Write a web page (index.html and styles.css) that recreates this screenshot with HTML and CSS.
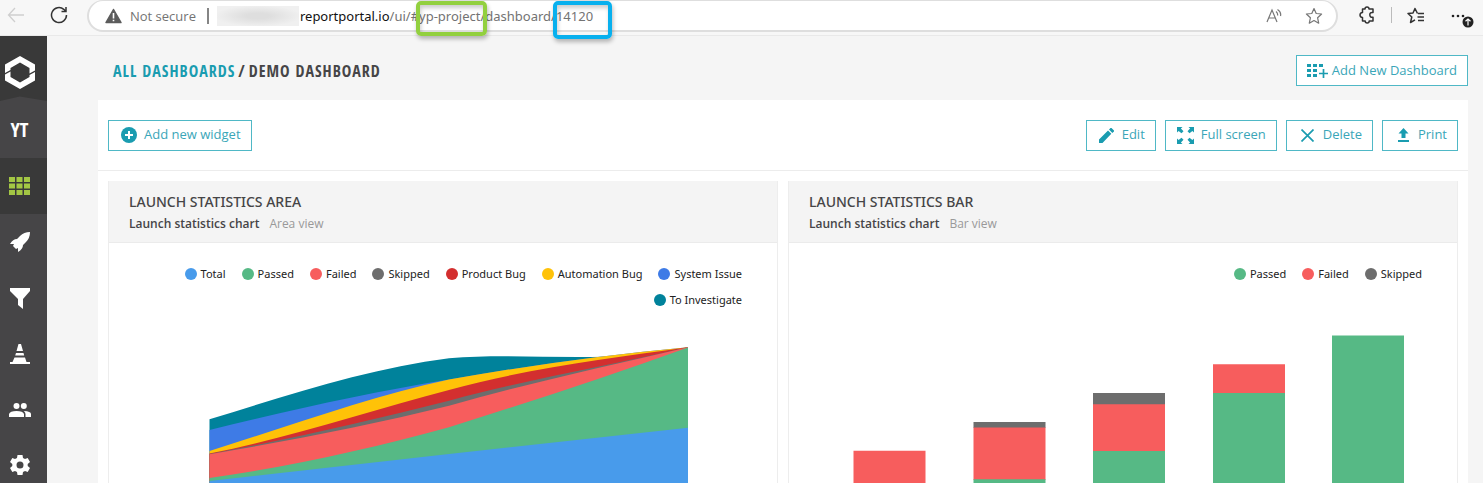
FILE: index.html
```html
<!DOCTYPE html>
<html lang="en">
<head>
<meta charset="utf-8">
<title>Demo dashboard</title>
<link rel="stylesheet" href="styles.css">
</head>
<body>
<header class="browser">
  <button class="chrome-btn back" aria-label="Back"><svg width="18" height="16" viewBox="0 0 18 16"><path d="M8 1 1.500 8 8 15M1.500 8H17" fill="none" stroke="#cfcfcf" stroke-width="1.300"/></svg></button>
  <button class="chrome-btn reload" aria-label="Reload"><svg width="18" height="18" viewBox="0 0 18 18"><path d="M16.500 9A7.500 7.500 0 1 1 13.800 3.300L15.500 5M16 1V5.500H11.500" fill="none" stroke="#333" stroke-width="1.500"/></svg></button>
  <div class="address">
    <svg class="warn" width="17" height="16" viewBox="0 0 17 16"><path d="M8.500 1.500 16 14.500H1Z" fill="#5c5c5c" stroke="#5c5c5c" stroke-width="1.500" stroke-linejoin="round"/><path d="M8.500 5V10.500M8.500 11.800V13.300" stroke="#fff" stroke-width="1.600"/></svg>
    <span class="secure">Not secure</span>
    <span class="bar"></span>
    <span class="redacted"></span>
    <span class="url"><b>reportportal.io</b>/ui/#<span class="mark green">yp-project</span>/dashboard/<span class="mark blue">14120</span></span>
    <button class="chrome-btn read" aria-label="Read aloud"><svg width="17" height="16" viewBox="0 0 17 16"><g fill="none" stroke="#777" stroke-width="1.200"><path d="M1 14 6 2 11 14M2.800 10H9.200M10 3.500Q12 5 11.600 7.500M11.500 1.500Q15.500 4 14.500 8"/></g></svg></button>
    <button class="chrome-btn" aria-label="Add to favorites"><svg width="18" height="18" viewBox="0 0 18 18"><path d="M9 1.500 11.200 6.500 16.600 7 12.600 10.800 13.700 16.200 9 13.500 4.300 16.200 5.400 10.800 1.400 7 6.800 6.500Z" fill="none" stroke="#777" stroke-width="1.200" stroke-linejoin="round"/></svg></button>
  </div>
  <div class="tools">
    <button class="chrome-btn" aria-label="Extensions"><svg width="17" height="18" viewBox="0 0 17 18"><path d="M3.500 3H6Q6 1 8 1T10 3H14V6.500Q10.800 6 10.800 8.800T14 11.200V15H10.200Q10.200 17 8.200 17T6.200 15H3.500V11.500Q1 11.300 1 9T3.500 6.500Z" fill="none" stroke="#333" stroke-width="1.500" stroke-linejoin="round"/></svg></button>
    <span class="tool-line"></span>
    <button class="chrome-btn" aria-label="Favorites"><svg width="18" height="17" viewBox="0 0 18 17"><path d="M10.500 6.500 8 1.500 6 6 1 6.500 4.800 10 3.500 15.500 8 12.800M11 6.500H17M10.500 10H17M11 13.500H17M8 1.500 10.500 6.500" fill="none" stroke="#333" stroke-width="1.500" stroke-linejoin="round"/></svg></button>
    <button class="chrome-btn more" aria-label="Settings and more"><svg width="23" height="20" viewBox="0 0 23 20"><g fill="#222"><circle cx="2" cy="6" r="1.300"/><circle cx="7" cy="6" r="1.300"/><circle cx="12" cy="6" r="1.300"/><circle cx="17" cy="12" r="5.500"/></g><path d="M17 15.500V9M14.500 11.300 17 9 19.500 11.300" fill="none" stroke="#fff" stroke-width="1.200"/></svg></button>
  </div>
</header>
<div class="app">
  <nav class="side">
    <a class="logo" href="#" aria-label="Home"><svg width="30" height="33" viewBox="0 0 30 33"><path d="M0 17V8.500L15 0 30 8.500V14.500L24.500 17.500V12L15 6.500 5.500 12V14Z" fill="#fff"/><path d="M30 16V24.500L15 33 0 24.500V18.500L5.500 15.500V21L15 26.500 24.500 21V19Z" fill="#fff"/></svg></a>
    <a class="project" href="#">YT</a>
    <a class="item active" href="#" aria-label="Dashboards"><svg width="21" height="18" viewBox="0 0 21 18"><path d="M0 0h6v5H0zM7.500 0h6v5h-6zM15 0h6v5h-6zM0 6.500h6v5H0zM7.500 6.500h6v5h-6zM15 6.500h6v5h-6zM0 13h6v5H0zM7.500 13h6v5h-6zM15 13h6v5h-6z" fill="#a3c644"/></svg></a>
    <a class="item" href="#" aria-label="Launches"><svg width="20" height="20" viewBox="0 0 20 20"><path d="M20 0Q14 0 10 4L7 7Q3 7 0 12L4 12 3 14 6 17 8 16 8 20Q13 17 13 13L16 10Q20 6 20 0Z" fill="#fff"/></svg></a>
    <a class="item" href="#" aria-label="Filters"><svg width="20" height="21" viewBox="0 0 20 21"><path d="M0 0H20V3L13 11V21L8 17V11L0 3Z" fill="#fff"/></svg></a>
    <a class="item" href="#" aria-label="Debug"><svg width="20" height="20" viewBox="0 0 20 20"><path d="M8.500 0H11L13 7H6.500ZM6 9H13.500L14.200 11.500H5.200ZM4.500 13.500H15L16.500 18H20V20H0V18H2.500Z" fill="#fff"/></svg></a>
    <a class="item" href="#" aria-label="Members"><svg width="22" height="14" viewBox="0 0 22 14"><g fill="#fff"><circle cx="7.500" cy="3" r="3"/><circle cx="14.800" cy="3" r="3"/><path d="M0 14V11Q1 8 7.500 8T15 11V14ZM16.500 14V11Q16.500 9.500 14.800 8 22 8.300 22 11V14Z"/></g></svg></a>
    <a class="item" href="#" aria-label="Settings"><svg width="20" height="20" viewBox="0 0 20 20"><path d="M7.500 0H12.500L13 3 15 4 17.700 2.900 20 7.100 17.700 9V11L20 12.900 17.700 17.100 15 16 13 17 12.500 20H7.500L7 17 5 16 2.300 17.100 0 12.900 2.300 11V9L0 7.100 2.300 2.900 5 4 7 3ZM10 6.500A3.500 3.500 0 1 0 10 13.500 3.500 3.500 0 1 0 10 6.500Z" fill="#fff" fill-rule="evenodd"/></svg></a>
  </nav>
  <main class="main">
    <div class="heading">
      <h1 class="crumbs"><a href="#">ALL DASHBOARDS</a><span>/</span><span>DEMO DASHBOARD</span></h1>
      <button class="btn"><svg width="21" height="14" viewBox="0 0 21 14"><path d="M0 0h4v3H0zM6 0h4v3H6zM12 0h4v3h-4zM0 5h4v3H0zM6 5h4v3H6zM0 10h4v3H0zM6 10h4v3H6z" fill="#1a9cb0"/><path d="M16.500 5V14M12 9.500H21" stroke="#1a9cb0" stroke-width="1.700"/></svg>Add New Dashboard</button>
    </div>
    <section class="board">
      <div class="toolbar">
        <button class="btn add"><svg width="16" height="16" viewBox="0 0 16 16"><circle cx="8" cy="8" r="8" fill="#1a9cb0"/><path d="M8 4V12M4 8H12" stroke="#fff" stroke-width="2"/></svg>Add new widget</button>
        <div class="actions">
          <button class="btn edit"><svg width="15" height="15" viewBox="0 0 15 15"><path d="M0 15V11.500L9 2.500 12.300 5.800 3.500 15ZM10 1.500 11.500 0H12.500L15 2.500V3.500L13.300 5Z" fill="#1a9cb0"/></svg>Edit</button>
          <button class="btn full"><svg width="17" height="17" viewBox="0 0 17 17"><path d="M0 0H5.500L3.900 1.600 6.500 4.200 4.500 6.200 1.600 3.900 0 5.500ZM17 0V5.500L15.400 3.900 12.500 6.200 10.500 4.200 13.100 1.600 11.500 0ZM0 17V11.500L1.600 13.100 4.500 10.800 6.500 12.800 3.900 15.400 5.500 17ZM17 17H11.500L13.100 15.400 10.500 12.800 12.500 10.800 15.400 13.100 17 11.500Z" fill="#1a9cb0"/></svg>Full screen</button>
          <button class="btn delete"><svg width="13" height="13" viewBox="0 0 13 13"><path d="M.5 .5 12.500 12.500M12.500 .5 .5 12.500" stroke="#1a9cb0" stroke-width="1.700"/></svg>Delete</button>
          <button class="btn print"><svg width="11" height="14" viewBox="0 0 11 14"><path d="M5.500 0 10.500 5.500H7.500V10H3.500V5.500H.5ZM0 12H11V14H0Z" fill="#1a9cb0"/></svg>Print</button>
        </div>
      </div>
      <div class="widgets">
        <article class="widget">
          <div class="widget-head">
            <h2>LAUNCH STATISTICS AREA</h2>
            <p><b>Launch statistics chart</b><span>Area view</span></p>
          </div>
          <ul class="legend">
            <li><i class="c-total"></i>Total</li><li><i class="c-passed"></i>Passed</li><li><i class="c-failed"></i>Failed</li><li><i class="c-skipped"></i>Skipped</li><li><i class="c-product"></i>Product Bug</li><li><i class="c-auto"></i>Automation Bug</li><li><i class="c-system"></i>System Issue</li><li><i class="c-investigate"></i>To Investigate</li>
          </ul>
          <svg class="chart" viewBox="109 320 668 163" preserveAspectRatio="none">
            <path fill="#00829b" d="M209.500 419.300C290 394.600 370 368 449 358.200 529 352 608 365 688 347.300V483H209.500Z"/>
            <path fill="#3e7be6" d="M209.500 430C290 410.300 370 392.200 449 379.500 529 365.300 608 354.700 688 347.300V483H209.500Z"/>
            <path fill="#ffc208" d="M209.500 451C290 425.700 370 396.600 449 379.500 529 365.300 608 354.700 688 347.300V483H209.500Z"/>
            <path fill="#d32f2f" d="M209.500 453.500C290 437.600 370 410.700 449 390 529 368 608 358.500 688 347.300V483H209.500Z"/>
            <path fill="#6d6d6d" d="M209.500 454C290 439.200 370 420.400 449 400.700 529 379 608 366 688 347.300V483H209.500Z"/>
            <path fill="#f75d5d" d="M209.500 454.200C290 440.900 370 425.200 449 405.700 529 383 608 366 688 347.300V483H209.500Z"/>
            <path fill="#56b985" d="M209.500 478C290 466.500 370 449 449 427.300 529 402 608 376.400 688 347.400V483H209.500Z"/>
            <path fill="#489beb" d="M209.500 481 449 454 688 427.700V483H209.500Z"/>
          </svg>
        </article>
        <article class="widget">
          <div class="widget-head">
            <h2>LAUNCH STATISTICS BAR</h2>
            <p><b>Launch statistics chart</b><span>Bar view</span></p>
          </div>
          <ul class="legend">
            <li><i class="c-passed"></i>Passed</li><li><i class="c-failed"></i>Failed</li><li><i class="c-skipped"></i>Skipped</li>
          </ul>
          <svg class="chart" viewBox="789 320 668 163" preserveAspectRatio="none">
            <path fill="#6d6d6d" d="M973.500 422h72v6h-72zM1093 393h72v12h-72z"/>
            <path fill="#f75d5d" d="M853.500 450.700h72V483h-72zM973.500 427.500h72V480h-72zM1093 404.300h72V452h-72zM1213 364.300h72V394h-72z"/>
            <path fill="#56b985" d="M973.500 479.300h72V483h-72zM1093 451h72v32h-72zM1213 393h72v90h-72zM1332 335.400h72V483h-72z"/>
          </svg>
        </article>
      </div>
    </section>
  </main>
</div>
</body>
</html>
```
FILE: styles.css
```css
* { box-sizing: border-box; }
body { margin: 0; min-height: 100vh; display: flex; flex-direction: column; background: #f5f5f5; color: #464547; font-family: "Open Sans", sans-serif; font-size: 13px; }
button { font: inherit; color: inherit; cursor: pointer; }
a { text-decoration: none; }
svg { display: block; flex: none; }

.browser { display: flex; align-items: flex-start; height: 36px; background: #f7f7f7; border-bottom: 1px solid #e9e9e9; }
.chrome-btn { display: flex; align-items: center; height: 30px; padding: 0; border: 0; background: none; }
.back { margin-left: 7px; }
.reload { margin-left: 25px; margin-right: 19px; }
.address { flex: 1; display: flex; align-items: center; height: 32px; padding: 0 13px 0 16px; background: #fff; border: 2px solid #dedede; border-top-width: 1px; border-radius: 16px; color: #737373; }
.secure { margin-left: 8px; }
.bar { width: 2px; height: 16px; margin-left: 11px; background: #858585; }
.redacted { width: 82px; height: 20px; margin: 0 1px 0 8px; background: radial-gradient(ellipse at center, #dedede 20%, #f0f0f0 75%); }
.url { flex: 1; white-space: nowrap; font-family: "Noto Sans", sans-serif; }
.url b { font-weight: 400; color: #111; }
.mark { position: relative; }
.mark::after { content: ""; position: absolute; border: 4px solid #92d03f; border-radius: 5px; box-shadow: 1px 3px 4px #0004, inset 1px 3px 4px #0003; }
.green::after { inset: -6px -7px -11px -3px; }
.blue::after { inset: -6px -19px -14px -3px; border-color: #08b0ee; }
.read { margin-right: 22px; }
.tools { display: flex; align-items: center; gap: 15px; padding: 0 9px 0 21px; }
.more { margin-left: 11px; }
.more svg { margin-top: 10px; }
.tool-line { width: 1px; height: 16px; background: #bbb; }

.app { flex: 1; display: flex; }
.side { width: 47px; flex: none; display: flex; flex-direction: column; background: #464547; }
.side a { display: flex; align-items: center; justify-content: center; height: 56px; padding-right: 8px; }
.side .logo { height: 65px; padding-top: 7px; background: #393939; clip-path: polygon(0 0, 100% 0, 100% 100%, 42% 93%, 0 100%); }
.side .project { height: 57px; color: #fff; font: 700 20px "Open Sans Condensed", "Open Sans", sans-serif; }
.side .active { background: #393939; }
.side a:last-child { height: 45px; padding-top: 9px; }

.main { flex: 1; min-width: 0; display: flex; flex-direction: column; padding: 0 15px 0 51px; }
.heading { display: flex; align-items: center; justify-content: space-between; height: 64px; padding: 5px 0 0 15px; }
.crumbs { display: flex; gap: 3px; margin: 0; font: 700 16px "Open Sans Condensed", "Open Sans", sans-serif; letter-spacing: 1px; }
.crumbs a { color: #1a9cb0; }
.btn { display: flex; align-items: center; gap: 4px; height: 31px; padding: 0 10px 2px; background: #fff; border: 1px solid #4fb8c6; color: #3aa6b8; white-space: nowrap; }
.btn svg { margin-top: 2px; }
.board { flex: 1; display: flex; flex-direction: column; background: #fff; }
.toolbar { display: flex; align-items: center; justify-content: space-between; height: 71px; padding: 0 10px; border-bottom: 1px solid #ececec; }
.actions { display: flex; gap: 9px; }
.add { padding-left: 12px; gap: 7px; }
.edit { padding-left: 12px; gap: 8px; }
.full { padding-left: 11px; gap: 7px; }
.delete { padding-left: 14px; gap: 9px; }
.print { padding-left: 15px; gap: 9px; }

.widgets { flex: 1; display: grid; grid-template-columns: 1fr 1fr; gap: 10px; padding: 10px 10px 0; }
.widget { display: flex; flex-direction: column; border: 1px solid #ededed; border-width: 0 1px; }
.widget-head { height: 62px; padding: 11px 20px 0; background: #f4f4f4; border-bottom: 1px solid #ebebeb; }
.widget-head h2 { margin: 0; font-family: "Noto Sans", sans-serif; font-size: 14px; line-height: 20px; font-weight: 500; }
.widget-head p { display: flex; gap: 10px; margin: 3px 0 0; font-size: 12px; line-height: 18px; }
.widget-head b { font-weight: 600; }
.widget-head span { color: #999; font-weight: 500; }
.legend { display: flex; flex-wrap: wrap; justify-content: flex-end; gap: 8px 16px; margin: 0; padding: 22px 35px 0; list-style: none; color: #222; font-family: "Noto Sans", sans-serif; font-size: 11px; line-height: 18px; }
.legend li { display: flex; align-items: center; gap: 4px; }
.legend i { width: 12px; height: 12px; border-radius: 50%; }
.chart { width: 100%; height: 163px; margin-top: auto; }
.c-total { background: #489beb; }
.c-passed { background: #56b985; }
.c-failed { background: #f75d5d; }
.c-skipped { background: #6d6d6d; }
.c-product { background: #d32f2f; }
.c-auto { background: #ffc208; }
.c-system { background: #3e7be6; }
.c-investigate { background: #00829b; }
```
